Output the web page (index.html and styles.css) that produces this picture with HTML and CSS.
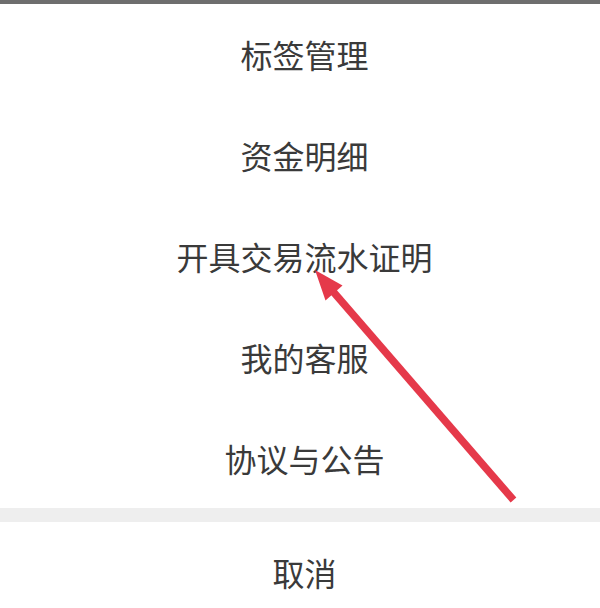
FILE: index.html
```html
<!DOCTYPE html>
<html lang="zh-CN">
<head>
<meta charset="utf-8">
<title>菜单</title>
<link rel="stylesheet" href="styles.css">
</head>
<body>
<div class="sheet">
  <div class="topbar"></div>
  <ul class="menu">
    <li class="item">标签管理</li>
    <li class="item">资金明细</li>
    <li class="item">开具交易流水证明</li>
    <li class="item">我的客服</li>
    <li class="item">协议与公告</li>
  </ul>
  <div class="divider"></div>
  <div class="item cancel">取消</div>
  <svg class="arrow" width="600" height="608" viewBox="0 0 600 608" xmlns="http://www.w3.org/2000/svg">
    <line x1="513.5" y1="500" x2="330" y2="288" stroke="#e5394a" stroke-width="7.5" stroke-linecap="butt"/>
    <polygon points="315,270 325.5,300.5 342.5,285.5" fill="#e5394a"/>
  </svg>
</div>
</body>
</html>
```

FILE: styles.css
```css
html, body {
  margin: 0;
  padding: 0;
  background: #ffffff;
}

.sheet {
  position: relative;
  width: 600px;
  height: 608px;
  overflow: hidden;
  font-family: "Noto Sans CJK SC", "Noto Sans", sans-serif;
  color: #3a3a3a;
}

.topbar {
  height: 4px;
  background: #6e6e6e;
}

.menu {
  list-style: none;
  margin: 0;
  padding: 0;
}

.item {
  height: 100.8px;
  display: flex;
  align-items: center;
  justify-content: center;
  font-size: 32px;
  line-height: 1;
  padding-top: 0;
  padding-left: 9px;
  box-sizing: border-box;
}

.divider {
  height: 14px;
  background: #eeeeee;
}

.arrow {
  position: absolute;
  left: 0;
  top: 0;
  pointer-events: none;
}
```
